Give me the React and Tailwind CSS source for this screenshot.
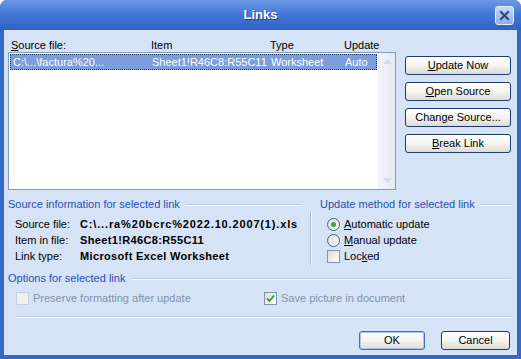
import React from 'react';

const font = { fontFamily: '"Liberation Sans", Arial, sans-serif' };

function XpButton({ children, primary, className = '' }) {
  return (
    <button
      className={`h-[19px] rounded-[3px] border text-[11px] text-black leading-none flex items-center justify-center bg-gradient-to-b from-white via-[#f4f4f0] to-[#dcdcd4] ${primary ? 'border-[#3c6fc8] shadow-[inset_0_0_0_1px_#a9c6f0]' : 'border-[#1f3b6b]'} ${className}`}
    >
      {children}
    </button>
  );
}

function Radio({ checked }) {
  return (
    <span className="w-[13px] h-[13px] rounded-full border border-[#3b6095] bg-gradient-to-br from-[#dcdcd4] to-white flex items-center justify-center shrink-0">
      {checked && <span className="w-[5px] h-[5px] rounded-full bg-[#3fa33f]" />}
    </span>
  );
}

function Check({ checked, disabled }) {
  return (
    <span
      className={`w-[13px] h-[13px] border flex items-center justify-center shrink-0 ${disabled && !checked ? 'border-[#c6cedc] bg-[#eef0f2]' : 'border-[#8193ae] bg-gradient-to-br from-[#dcdcd4] to-white'}`}
    >
      {checked && (
        <svg width="9" height="9" viewBox="0 0 9 9">
          <path d="M1 4.5 L3.5 7 L8 1.5" fill="none" stroke="#21a121" strokeWidth="1.8" />
        </svg>
      )}
    </span>
  );
}

function GroupLabel({ children, className = '' }) {
  return (
    <div className={`flex items-center gap-[6px] h-[14px] ${className}`}>
      <span className="text-[#1f50b4] whitespace-nowrap">{children}</span>
      <span className="flex-1 h-[1px] bg-[#bccae0] shadow-[0_1px_0_#f4f7fc]" />
    </div>
  );
}

export default function App() {
  return (
    <div className="w-[521px] h-[359px] flex flex-col text-[11px] text-black bg-[#3468c9] rounded-t-[7px] overflow-hidden" style={font}>
      {/* Title bar */}
      <div className="h-[30px] shrink-0 flex items-center bg-gradient-to-b from-[#6b9ae6] via-[#4276d6] to-[#2f61c4] px-[6px]">
        <div className="w-[20px]" />
        <div className="flex-1 text-center text-white font-bold text-[13px] [text-shadow:1px_1px_0_#1b3f8f]">Links</div>
        <div className="w-[19px] h-[19px] mr-[1px] rounded-[3px] border border-[#e6eefb] bg-gradient-to-b from-[#c7d9f5] to-[#8eaee2] flex items-center justify-center">
          <svg width="11" height="11" viewBox="0 0 11 11">
            <path d="M2 2 L9 9 M9 2 L2 9" stroke="#2d4c86" strokeWidth="2.2" strokeLinecap="square" />
          </svg>
        </div>
      </div>

      {/* Client area */}
      <div className="flex-1 mx-[4px] mb-[4px] bg-[#d6e3f6] flex flex-col pl-[4px] pr-[6px]">
        <div className="flex mt-[8px]">
          <div className="w-[388px] flex flex-col">
            <div className="flex h-[14px] items-center pl-[3px]">
              <span className="w-[140px]"><u>S</u>ource file:</span>
              <span className="w-[119px]">Item</span>
              <span className="w-[74px]">Type</span>
              <span>Update</span>
            </div>
            <div className="h-[138px] border border-[#7f9db9] bg-white flex">
              <div className="flex-1 p-[1px]">
                <div className="h-[16px] bg-[#7b9ddd] text-white flex items-center pl-[3px] outline outline-1 outline-dotted outline-[#2a3a5a] -outline-offset-1">
                  <span className="w-[139px]">C:\...\factura%20...</span>
                  <span className="w-[119px]">Sheet1!R46C8:R55C11</span>
                  <span className="w-[74px]">Worksheet</span>
                  <span>Auto</span>
                </div>
              </div>
              <div className="w-[17px] flex flex-col justify-between bg-gradient-to-r from-[#f1f4fa] to-[#e4e9f2] border-l border-[#eef1f7]">
                <div className="h-[17px] flex items-center justify-center">
                  <svg width="9" height="5" viewBox="0 0 9 5"><path d="M0 5 L4.5 0 L9 5Z" fill="#d4dced" /></svg>
                </div>
                <div className="h-[17px] flex items-center justify-center">
                  <svg width="9" height="5" viewBox="0 0 9 5"><path d="M0 0 L4.5 5 L9 0Z" fill="#d4dced" /></svg>
                </div>
              </div>
            </div>
          </div>
          <div className="ml-[9px] mt-[18px] flex flex-col gap-[7px] w-[106px]">
            <XpButton><span><u>U</u>pdate Now</span></XpButton>
            <XpButton><span><u>O</u>pen Source</span></XpButton>
            <XpButton><span>Chan<u>g</u>e Source...</span></XpButton>
            <XpButton><span><u>B</u>reak Link</span></XpButton>
          </div>
        </div>

        {/* Source info + update method */}
        <div className="flex mt-[7px]">
          <div className="w-[292px] flex flex-col">
            <GroupLabel>Source information for selected link</GroupLabel>
            <div className="flex flex-col pl-[7px] mt-[6px] gap-[2px]">
              <div className="flex h-[14px] items-center"><span className="w-[65px]">Source file:</span><b className="tracking-[0.85px] whitespace-nowrap">C:\...ra%20bcrc%2022.10.2007(1).xls</b></div>
              <div className="flex h-[14px] items-center"><span className="w-[65px]">Item in file:</span><b className="tracking-[0.35px]">Sheet1!R46C8:R55C11</b></div>
              <div className="flex h-[14px] items-center"><span className="w-[65px]">Link type:</span><b className="tracking-[0.35px]">Microsoft Excel Worksheet</b></div>
            </div>
          </div>
          <div className="w-[1px] bg-[#a9b8d2] mt-[14px] h-[54px] ml-[10px] shadow-[1px_0_0_#f4f7fc]" />
          <div className="flex-1 flex flex-col ml-[9px]">
            <GroupLabel>Update method for selected link</GroupLabel>
            <div className="flex flex-col pl-[7px] mt-[6px] gap-[2px]">
              <div className="flex h-[14px] items-center gap-[4px]"><Radio checked /><span><u>A</u>utomatic update</span></div>
              <div className="flex h-[14px] items-center gap-[4px]"><Radio /><span><u>M</u>anual update</span></div>
              <div className="flex h-[14px] items-center gap-[4px]"><Check /><span>Loc<u>k</u>ed</span></div>
            </div>
          </div>
        </div>

        {/* Options */}
        <GroupLabel className="mt-[6px]">Options for selected link</GroupLabel>
        <div className="flex mt-[6px] pl-[8px] h-[14px] items-center text-[#8193ae]">
          <div className="w-[248px] flex items-center gap-[4px]"><Check disabled /><span>Preserve formatting after update</span></div>
          <div className="flex items-center gap-[4px]"><Check checked disabled /><span>Save picture in document</span></div>
        </div>

        <div className="ml-[7px] mt-[11px] h-[1px] bg-[#bccae0] shadow-[0_1px_0_#f4f7fc]" />

        <div className="flex justify-end mt-[14px] gap-[16px] pr-[1px]">
          <XpButton primary className="w-[66px]">OK</XpButton>
          <XpButton className="w-[69px]">Cancel</XpButton>
        </div>
      </div>
    </div>
  );
}
